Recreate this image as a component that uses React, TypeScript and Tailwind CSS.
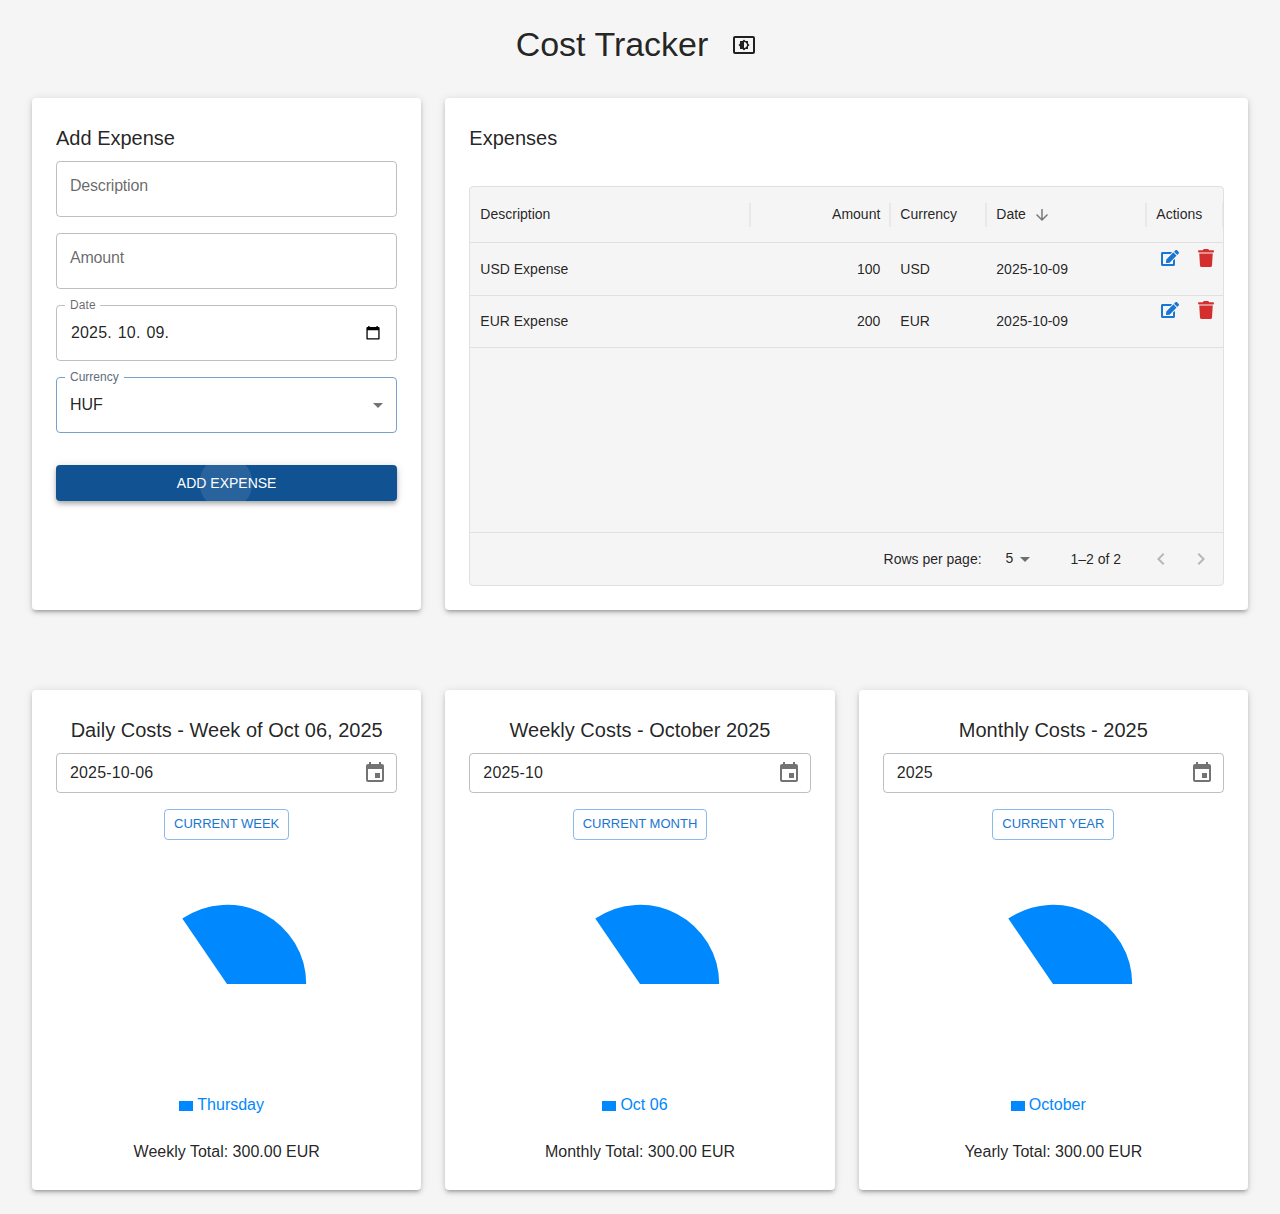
import React from 'react';
import {
  MdArrowDownward,
  MdArrowDropDown,
  MdEvent,
  MdKeyboardArrowLeft,
  MdKeyboardArrowRight,
  MdSettingsBrightness,
} from 'react-icons/md';
import { FaEdit, FaTrash } from 'react-icons/fa';

const CARD =
  'rounded bg-white p-6 shadow-[0_3px_3px_-2px_rgba(0,0,0,0.2),0_3px_4px_0_rgba(0,0,0,0.14),0_1px_8px_0_rgba(0,0,0,0.12)]';
const HEADING = 'mb-[7px] text-[20px] leading-8';

const expenses = [
  { description: 'USD Expense', amount: 100, currency: 'USD', date: '2025-10-09' },
  { description: 'EUR Expense', amount: 200, currency: 'EUR', date: '2025-10-09' },
];

const charts = [
  { title: 'Daily Costs - Week of Oct 06, 2025', value: '2025-10-06', button: 'Current Week', buttonWidth: 'w-[125px]', legend: 'Thursday', total: 'Weekly Total: 300.00 EUR' },
  { title: 'Weekly Costs - October 2025', value: '2025-10', button: 'Current Month', buttonWidth: 'w-[134px]', legend: 'Oct 06', total: 'Monthly Total: 300.00 EUR' },
  { title: 'Monthly Costs - 2025', value: '2025', button: 'Current Year', buttonWidth: 'w-[122px]', legend: 'October', total: 'Yearly Total: 300.00 EUR' },
];

function FloatingLabel({ text, className }: { text: string; className: string }) {
  return (
    <span className={`absolute -top-[9px] left-2 h-4 bg-white pl-[5px] text-[12px] leading-4 ${className}`}>
      {text}
    </span>
  );
}

function DateGlyph() {
  return (
    <svg width="14" height="14" viewBox="0 0 14 14">
      <path fillRule="evenodd" d="M2.2 0h1.4v1.1h6.8V0h1.4v1.1h.9c.5 0 .9.4.9.9v10.6c0 .6-.4 1-.9 1H1.300c-.5 0-.9-.4-.9-1V2c0-.5.4-.9.9-.9h.9zM1.700 4.300v8h10.600v-8z" />
    </svg>
  );
}

function AddExpense() {
  return (
    <section className={`${CARD} w-[389.33px] shrink-0`}>
      <h2 className={HEADING}>Add Expense</h2>
      <div className="flex flex-col gap-4 text-[16px]">
        <div className="h-14 rounded border border-black/25 px-[13px] pt-3 leading-6 tracking-[-0.2px] text-black/60">Description</div>
        <div className="h-14 rounded border border-black/25 px-[13px] pt-3 leading-6 tracking-[-0.2px] text-black/60">Amount</div>
        <div className="relative flex h-14 items-center rounded border border-black/25 pr-4 pl-[14px]">
          <FloatingLabel text="Date" className="w-[35px] tracking-[0.1px] text-black/60" />
          <div className="flex flex-1 gap-[6px] tracking-[0.15px]">
            <span>2025.</span>
            <span>10.</span>
            <span>09.</span>
          </div>
          <DateGlyph />
        </div>
        <div className="relative flex h-14 items-center rounded border border-[#78a1cb] pr-[6px] pl-[13px]">
          <FloatingLabel text="Currency" className="w-[59px] text-[#5e6c7d]" />
          <span className="flex-1">HUF</span>
          <MdArrowDropDown className="size-6 text-black/55" />
        </div>
      </div>
      <button className="relative mt-8 flex h-9 w-full items-center justify-center overflow-hidden rounded bg-[#115293] text-[14px] font-normal text-white uppercase shadow-[0_2px_4px_-1px_rgba(0,0,0,0.2),0_4px_5px_0_rgba(0,0,0,0.14),0_1px_10px_0_rgba(0,0,0,0.12)]">
        <span className="absolute top-1/2 left-1/2 -ml-[0.5px] size-[53px] -translate-x-1/2 -translate-y-1/2 rounded-full bg-white/10" />
        <span className="relative">Add Expense</span>
      </button>
    </section>
  );
}

const COLUMNS = 'grid grid-cols-[281px_140px_96px_160px_1fr] items-center';

function Expenses() {
  return (
    <section className={`${CARD} h-[512px] min-w-0 flex-1`}>
      <h2 className={HEADING}>Expenses</h2>
      <div className="mt-8 flex h-[400px] flex-col overflow-hidden rounded border border-[#e0e0e0] bg-[#f5f5f5] text-[14px]">
        <div className={`${COLUMNS} h-14 border-b border-[#e0e0e0]`}>
          <div className="flex h-6 items-center border-r-2 border-[#e9e9e9] pl-[10px]">Description</div>
          <div className="flex h-6 items-center justify-end border-r-2 border-[#e9e9e9] pr-[9px]">Amount</div>
          <div className="flex h-6 items-center border-r-2 border-[#e9e9e9] pl-[9px]">Currency</div>
          <div className="flex h-6 items-center gap-[7px] border-r-2 border-[#e9e9e9] pl-[9px]">
            Date
            <MdArrowDownward className="size-[18px] text-black/50" />
          </div>
          <div className="flex h-6 items-center border-r border-[#e9e9e9] pl-[9px]">Actions</div>
        </div>
        {expenses.map((row, i) => (
          <div key={row.description} className={`${COLUMNS} border-b border-[#e0e0e0] ${i === 0 ? 'h-[53px]' : 'h-[52px]'}`}>
            <div className="pl-[10px]">{row.description}</div>
            <div className="pr-[11px] text-right">{row.amount}</div>
            <div className="pl-[9px]">{row.currency}</div>
            <div className="pl-[9px]">{row.date}</div>
            <div className={`flex gap-[18px] self-start pl-[14px] ${i === 0 ? 'pt-[6px]' : 'pt-[5px]'}`}>
              <FaEdit className="size-[18px] text-[#1976d2]" />
              <FaTrash className="size-[18px] text-[#d32f2f]" />
            </div>
          </div>
        ))}
        <div className="mt-auto flex h-[53px] items-center justify-end border-t border-[#e0e0e0] pr-[10px]">
          <span>Rows per page:</span>
          <span className="ml-6 -mt-px">5</span>
          <MdArrowDropDown className="size-6 text-black/55" />
          <span className="ml-[33px]">1–2 of 2</span>
          <MdKeyboardArrowLeft className="ml-7 size-6 text-black/25" />
          <MdKeyboardArrowRight className="ml-4 size-6 text-black/25" />
        </div>
      </div>
    </section>
  );
}

function CostChart({ title, value, button, buttonWidth, legend, total }: (typeof charts)[number]) {
  return (
    <section className={`${CARD} flex h-[500px] flex-col items-center`}>
      <h2 className={HEADING}>{title}</h2>
      <div className="flex h-10 w-full items-center justify-between rounded border border-black/25 pr-[9px] pl-[13px] text-[16px] tracking-[0.00938em]">
        <span>{value}</span>
        <MdEvent className="size-6 text-black/55" />
      </div>
      <button className={`mt-4 h-[31px] rounded border border-[#1976d2]/50 pb-[2px] text-[13px] whitespace-nowrap text-[#1976d2] uppercase ${buttonWidth}`}>
        {button}
      </button>
      <svg className="mt-[60px]" width="168" height="168" viewBox="-84 -84 168 168">
        <path d="M0 0L79.200 0A79.200 79.200 0 0 0 -44.700 -65.400Z" fill="#0088fe" />
      </svg>
      <div className="mt-[25px] mr-[10px] flex h-6 items-center gap-1 text-[16px] text-[#0088fe]">
        <span className="mt-[2px] h-[10.5px] w-[14px] bg-[#0088fe]" />
        <span>{legend}</span>
      </div>
      <p className="mt-[23px] text-[16px] leading-6">{total}</p>
    </section>
  );
}

export default function App() {
  return (
    <main className="h-[1214px] bg-[#f5f5f5] px-8 pt-6 font-['Liberation_Sans',Arial,sans-serif] text-black/87">
      <header className="flex h-[42px] items-center justify-center gap-6 pr-2">
        <h1 className="-mt-[2px] text-[34px] leading-[42px]">Cost Tracker</h1>
        <MdSettingsBrightness className="size-6" />
      </header>
      <div className="mt-8 flex gap-6">
        <AddExpense />
        <Expenses />
      </div>
      <div className="mt-20 grid grid-cols-3 gap-6">
        {charts.map((chart) => (
          <CostChart key={chart.title} {...chart} />
        ))}
      </div>
    </main>
  );
}
